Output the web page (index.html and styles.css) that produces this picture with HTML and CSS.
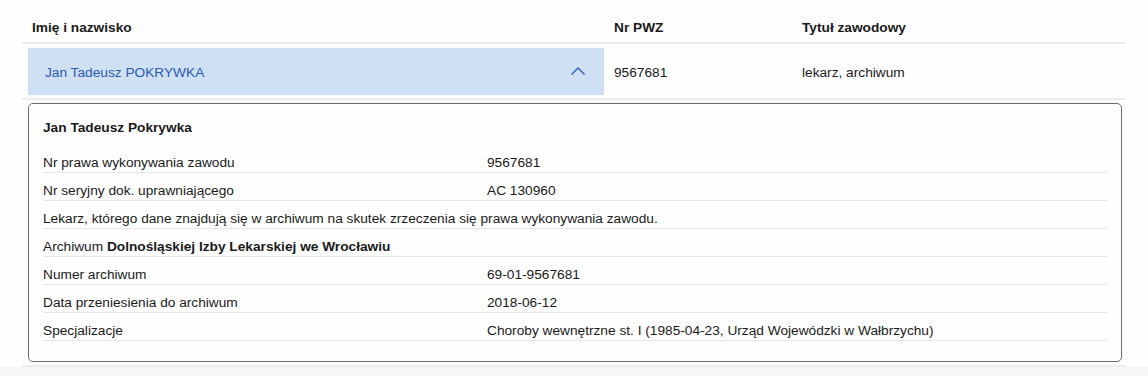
FILE: index.html
```html
<!DOCTYPE html>
<html lang="pl">
<head>
<meta charset="utf-8">
<title>Lekarz</title>
<link rel="stylesheet" href="styles.css">
</head>
<body>
<div class="page">
  <div class="table">
    <div class="row head">
      <div class="th">Imię i nazwisko</div>
      <div class="th">Nr PWZ</div>
      <div class="th">Tytuł zawodowy</div>
    </div>
    <div class="row data">
      <div class="name-cell">
        <span class="name">Jan Tadeusz POKRYWKA</span>
        <svg class="chev" width="16" height="10" viewBox="0 0 16 10"><path d="M1.5 8.5 L8 2 L14.5 8.5" fill="none" stroke="#3566bd" stroke-width="1.5"/></svg>
      </div>
      <div class="td">9567681</div>
      <div class="td">lekarz, archiwum</div>
    </div>
    <div class="detail-row">
      <div class="box">
        <div class="title">Jan Tadeusz Pokrywka</div>
        <div class="line"><span>Nr prawa wykonywania zawodu</span><span>9567681</span></div>
        <div class="line"><span>Nr seryjny dok. uprawniającego</span><span>AC 130960</span></div>
        <div class="line full">Lekarz, którego dane znajdują się w archiwum na skutek zrzeczenia się prawa wykonywania zawodu.</div>
        <div class="line full">Archiwum <b>Dolnośląskiej Izby Lekarskiej we Wrocławiu</b></div>
        <div class="line"><span>Numer archiwum</span><span>69-01-9567681</span></div>
        <div class="line"><span>Data przeniesienia do archiwum</span><span>2018-06-12</span></div>
        <div class="line"><span>Specjalizacje</span><span>Choroby wewnętrzne st. I (1985-04-23, Urząd Wojewódzki w Wałbrzychu)</span></div>
      </div>
    </div>
  </div>
</div>
</body>
</html>
```
FILE: styles.css
```css
html, body {
  margin: 0;
  padding: 0;
}
body {
  background: #f6f6f6;
  font-family: "Liberation Sans", Arial, sans-serif;
  font-size: 13.7px;
  line-height: 17px;
  color: #1a1a1a;
}
.page {
  background: #fefefe;
  padding: 0 22px;
}
.table {
  display: flex;
  flex-direction: column;
}
.row {
  display: grid;
  grid-template-columns: 582px 188px 1fr;
  border-bottom: 2px solid #ececec;
}
.head {
  height: 42px;
  align-items: start;
}
.th {
  font-weight: bold;
  padding: 19px 10px 0;
}
.data {
  padding: 4px 0 3px;
  align-items: center;
}
.name-cell {
  box-sizing: border-box;
  margin-left: 6px;
  height: 47px;
  background: #cfdff4;
  display: flex;
  align-items: center;
  justify-content: space-between;
  padding: 1px 18px 0 17px;
}
.name {
  color: #2a5bb3;
}
.chev {
  display: block;
  margin-top: -2px;
}
.td {
  padding: 1px 10px 0;
}
.detail-row {
  padding: 3px 4px 3px 6px;
  border-bottom: 2px solid #ececec;
}
.box {
  border: 1px solid #6a6a6a;
  border-radius: 5px;
  padding: 0 14px 20px;
  background: #fefefe;
}
.title {
  font-weight: bold;
  padding: 15px 0 9px;
}
.line {
  display: grid;
  grid-template-columns: 444px 1fr;
  padding: 9px 0 1px;
  border-bottom: 1px solid #e6e6e6;
}
.line.full {
  display: block;
}
```
